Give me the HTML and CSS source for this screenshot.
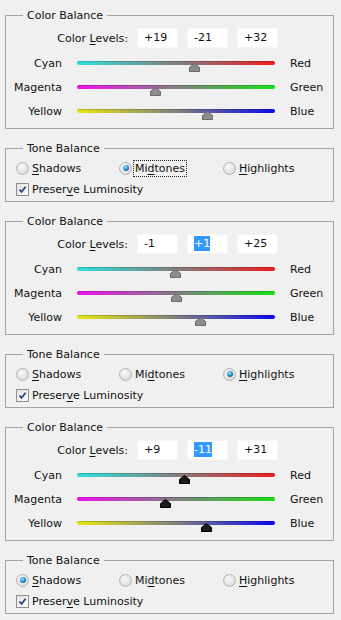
FILE: index.html
```html
<!DOCTYPE html>
<html lang="en">
<head>
  <meta charset="UTF-8" />
  <meta name="viewport" content="width=device-width, initial-scale=1" />
  <title>Color Balance</title>
  <link rel="stylesheet" href="styles.css">
</head>
<body>
  <!-- Set 1: midtones -->
  <fieldset class="group">
    <legend>Color Balance</legend>
    <div class="levels">
      <span class="levels-label">Color <u>L</u>evels:</span>
      <span class="field">+19</span>
      <span class="field">-21</span>
      <span class="field">+32</span>
    </div>
    <div class="slider-row">
      <span class="from">Cyan</span>
      <div class="track cyan-red"><span class="thumb" style="left:59.5%"><svg viewBox="0 0 11 9"><polygon points="5.5,0.5 10.5,4.5 10.5,8.5 0.5,8.5 0.5,4.5" /></svg></span></div>
      <span class="to">Red</span>
    </div>
    <div class="slider-row">
      <span class="from">Magenta</span>
      <div class="track magenta-green"><span class="thumb" style="left:39.5%"><svg viewBox="0 0 11 9"><polygon points="5.5,0.5 10.5,4.5 10.5,8.5 0.5,8.5 0.5,4.5" /></svg></span></div>
      <span class="to">Green</span>
    </div>
    <div class="slider-row">
      <span class="from">Yellow</span>
      <div class="track yellow-blue"><span class="thumb" style="left:66%"><svg viewBox="0 0 11 9"><polygon points="5.5,0.5 10.5,4.5 10.5,8.5 0.5,8.5 0.5,4.5" /></svg></span></div>
      <span class="to">Blue</span>
    </div>
  </fieldset>

  <fieldset class="group tone">
    <legend>Tone Balance</legend>
    <div class="radios">
      <label class="option"><span class="radio"></span><span><u>S</u>hadows</span></label>
      <label class="option"><span class="radio checked"></span><span class="focused">Mi<u>d</u>tones</span></label>
      <label class="option"><span class="radio"></span><span><u>H</u>ighlights</span></label>
    </div>
    <label class="option check-row">
      <span class="checkbox"><svg viewBox="0 0 9 9"><path d="M1.5 4.5 L3.6 6.8 L7.6 1.8" /></svg></span>
      <span>Preser<u>v</u>e Luminosity</span>
    </label>
  </fieldset>

  <!-- Set 2: highlights -->
  <fieldset class="group">
    <legend>Color Balance</legend>
    <div class="levels">
      <span class="levels-label">Color <u>L</u>evels:</span>
      <span class="field">-1</span>
      <span class="field"><span class="selected">+1</span></span>
      <span class="field">+25</span>
    </div>
    <div class="slider-row">
      <span class="from">Cyan</span>
      <div class="track cyan-red"><span class="thumb" style="left:49.5%"><svg viewBox="0 0 11 9"><polygon points="5.5,0.5 10.5,4.5 10.5,8.5 0.5,8.5 0.5,4.5" /></svg></span></div>
      <span class="to">Red</span>
    </div>
    <div class="slider-row">
      <span class="from">Magenta</span>
      <div class="track magenta-green"><span class="thumb" style="left:50.5%"><svg viewBox="0 0 11 9"><polygon points="5.5,0.5 10.5,4.5 10.5,8.5 0.5,8.5 0.5,4.5" /></svg></span></div>
      <span class="to">Green</span>
    </div>
    <div class="slider-row">
      <span class="from">Yellow</span>
      <div class="track yellow-blue"><span class="thumb" style="left:62.5%"><svg viewBox="0 0 11 9"><polygon points="5.5,0.5 10.5,4.5 10.5,8.5 0.5,8.5 0.5,4.5" /></svg></span></div>
      <span class="to">Blue</span>
    </div>
  </fieldset>

  <fieldset class="group tone">
    <legend>Tone Balance</legend>
    <div class="radios">
      <label class="option"><span class="radio"></span><span><u>S</u>hadows</span></label>
      <label class="option"><span class="radio"></span><span>Mi<u>d</u>tones</span></label>
      <label class="option"><span class="radio checked"></span><span><u>H</u>ighlights</span></label>
    </div>
    <label class="option check-row">
      <span class="checkbox"><svg viewBox="0 0 9 9"><path d="M1.5 4.5 L3.6 6.8 L7.6 1.8" /></svg></span>
      <span>Preser<u>v</u>e Luminosity</span>
    </label>
  </fieldset>

  <!-- Set 3: shadows -->
  <fieldset class="group active">
    <legend>Color Balance</legend>
    <div class="levels">
      <span class="levels-label">Color <u>L</u>evels:</span>
      <span class="field">+9</span>
      <span class="field"><span class="selected">-11</span></span>
      <span class="field">+31</span>
    </div>
    <div class="slider-row">
      <span class="from">Cyan</span>
      <div class="track cyan-red"><span class="thumb" style="left:54.5%"><svg viewBox="0 0 11 9"><polygon points="5.5,0.5 10.5,4.5 10.5,8.5 0.5,8.5 0.5,4.5" /></svg></span></div>
      <span class="to">Red</span>
    </div>
    <div class="slider-row">
      <span class="from">Magenta</span>
      <div class="track magenta-green"><span class="thumb" style="left:44.5%"><svg viewBox="0 0 11 9"><polygon points="5.5,0.5 10.5,4.5 10.5,8.5 0.5,8.5 0.5,4.5" /></svg></span></div>
      <span class="to">Green</span>
    </div>
    <div class="slider-row">
      <span class="from">Yellow</span>
      <div class="track yellow-blue"><span class="thumb" style="left:65.5%"><svg viewBox="0 0 11 9"><polygon points="5.5,0.5 10.5,4.5 10.5,8.5 0.5,8.5 0.5,4.5" /></svg></span></div>
      <span class="to">Blue</span>
    </div>
  </fieldset>

  <fieldset class="group tone">
    <legend>Tone Balance</legend>
    <div class="radios">
      <label class="option"><span class="radio checked"></span><span><u>S</u>hadows</span></label>
      <label class="option"><span class="radio"></span><span>Mi<u>d</u>tones</span></label>
      <label class="option"><span class="radio"></span><span><u>H</u>ighlights</span></label>
    </div>
    <label class="option check-row">
      <span class="checkbox"><svg viewBox="0 0 9 9"><path d="M1.5 4.5 L3.6 6.8 L7.6 1.8" /></svg></span>
      <span>Preser<u>v</u>e Luminosity</span>
    </label>
  </fieldset>
</body>
</html>
```

FILE: styles.css
```css
body {
  margin: 0;
  padding: 7px 7px 0 5px;
  background: #f0f0f0;
  color: #111;
  font-family: 'DejaVu Sans', Tahoma, sans-serif;
  font-size: 11px;
}

u {
  text-decoration-thickness: 1px;
  text-underline-offset: 2px;
}

/* Group boxes */
.group {
  margin: 0 0 11px;
  padding: 4px 0 5px;
  border: 1px solid #a3a3a3;
  min-inline-size: 0;
}

.group legend {
  margin-left: 17px;
  padding: 0 4px;
  line-height: 17px;
}

.group.tone {
  padding: 1px 0 2px;
}

/* Color levels row */
.levels {
  display: grid;
  grid-template-columns: 122px 41px 41px 41px;
  column-gap: 9px;
  align-items: center;
  height: 20px;
  margin-bottom: 3px;
}

.levels-label {
  text-align: right;
}

.field {
  height: 20px;
  background: #fff;
  padding-left: 6px;
  box-sizing: border-box;
  border: 1px solid #f6f6f6;
  line-height: 18px;
}

.selected {
  background: #3399ff;
  color: #fff;
  padding: 1px 0;
}

/* Slider rows */
.slider-row {
  display: grid;
  grid-template-columns: 56px 198px auto;
  column-gap: 15px;
  align-items: center;
  height: 24px;
}

.from {
  text-align: right;
}

.track {
  position: relative;
  height: 4px;
  border-radius: 2px;
  box-shadow: inset 0 1px 0 rgba(0, 0, 0, 0.18);
}

.cyan-red {
  background: linear-gradient(to right, #30e0e0, #808080 50%, #f01c1c);
}

.magenta-green {
  background: linear-gradient(to right, #f010f0, #808080 50%, #18e018);
}

.yellow-blue {
  background: linear-gradient(to right, #e8e810, #808080 50%, #0a0af0);
}

.thumb {
  position: absolute;
  top: 2px;
  width: 11px;
  height: 9px;
  margin-left: -5.5px;
}

.thumb svg {
  display: block;
  width: 11px;
  height: 9px;
}

.thumb polygon {
  fill: #8c8c8c;
  stroke: #6a6a6a;
  stroke-width: 1;
}

.active .thumb polygon {
  fill: #1c1c1c;
  stroke: #000;
}

/* Tone balance */
.radios {
  display: grid;
  grid-template-columns: 103px 104px auto;
  padding-left: 10px;
  height: 20px;
  align-items: center;
}

.option {
  display: flex;
  align-items: center;
  gap: 3px;
}

.radio {
  width: 13px;
  height: 13px;
  border-radius: 50%;
  box-sizing: border-box;
  border: 1px solid #b4b4b4;
  background: radial-gradient(circle at 40% 35%, #fbfbfb, #dedede 70%, #cfcfcf);
  position: relative;
}

.radio.checked::after {
  content: "";
  position: absolute;
  left: 2.5px;
  top: 2.5px;
  width: 6px;
  height: 6px;
  border-radius: 50%;
  background: radial-gradient(circle at 40% 35%, #a6e6ff, #2c96cf 45%, #0f4f78 85%);
}

.focused {
  outline: 1px dotted #222;
  outline-offset: 1px;
}

.check-row {
  padding-left: 10px;
  height: 20px;
  margin-top: 1px;
}

.checkbox {
  width: 13px;
  height: 13px;
  box-sizing: border-box;
  border: 1px solid #8e8f8f;
  background: linear-gradient(135deg, #e2e2e2, #fdfdfd);
  padding: 1px;
}

.checkbox svg {
  display: block;
  width: 9px;
  height: 9px;
}

.checkbox path {
  fill: none;
  stroke: #24438f;
  stroke-width: 1.8;
}
```
